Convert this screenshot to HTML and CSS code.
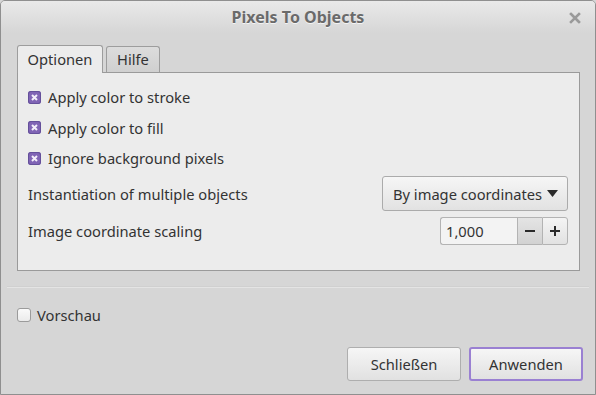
FILE: index.html
```html
<!DOCTYPE html>
<html>
<head>
<meta charset="utf-8">
<link rel="stylesheet" href="styles.css">
</head>
<body>
<div class="window">
  <div class="titlebar">
    <span></span>
    <span class="title">Pixels To Objects</span>
    <span class="close">
      <svg width="12" height="12" viewBox="0 0 12 12"><path d="M2 2 L10 10 M10 2 L2 10" stroke="#9a9a9a" stroke-width="2.6" stroke-linecap="square"/></svg>
    </span>
  </div>
  <div class="content">
    <div class="tabs">
      <div class="tab active">Optionen</div>
      <div class="tab">Hilfe</div>
    </div>
    <div class="panel">
      <div class="check-row"><span class="cb checked"><svg width="13" height="13" viewBox="0 0 13 13"><path d="M4 4 L9 9 M9 4 L4 9" stroke="#f3eefa" stroke-width="2"/></svg></span><span>Apply color to stroke</span></div>
      <div class="check-row"><span class="cb checked"><svg width="13" height="13" viewBox="0 0 13 13"><path d="M4 4 L9 9 M9 4 L4 9" stroke="#f3eefa" stroke-width="2"/></svg></span><span>Apply color to fill</span></div>
      <div class="check-row"><span class="cb checked"><svg width="13" height="13" viewBox="0 0 13 13"><path d="M4 4 L9 9 M9 4 L4 9" stroke="#f3eefa" stroke-width="2"/></svg></span><span>Ignore background pixels</span></div>
      <div class="opt-row combo-row">
        <span>Instantiation of multiple objects</span>
        <div class="combo">By image coordinates<svg width="11" height="7" viewBox="0 0 11 7"><path d="M0 0 H11 L5.5 7 Z" fill="#2a2a2a"/></svg></div>
      </div>
      <div class="opt-row spin-row">
        <span>Image coordinate scaling</span>
        <div class="spin">
          <div class="spin-entry">1,000</div>
          <div class="spin-btn"><svg width="12" height="12" viewBox="0 0 12 12"><path d="M1 6 H11" stroke="#2a2a2a" stroke-width="2"/></svg></div>
          <div class="spin-btn last"><svg width="12" height="12" viewBox="0 0 12 12"><path d="M1 6 H11 M6 1 V11" stroke="#2a2a2a" stroke-width="2"/></svg></div>
        </div>
      </div>
    </div>
  </div>
  <div class="separator"></div>
  <div class="preview"><span class="cb empty"></span><span>Vorschau</span></div>
  <div class="buttons">
    <div class="btn">Schließen</div>
    <div class="btn default">Anwenden</div>
  </div>
</div>
</body>
</html>
```

FILE: styles.css
```css
html, body {
  margin: 0;
  padding: 0;
  background: #d6d6d6;
}
body {
  font-family: "Noto Sans", "Open Sans", sans-serif;
  font-size: 14.7px;
  color: #333333;
}
.window {
  box-sizing: border-box;
  width: 596px;
  height: 395px;
  border: 1px solid #8f8f8f;
  border-radius: 5px 5px 0 0;
  background: #d6d6d6;
  display: flex;
  flex-direction: column;
  overflow: hidden;
}
.titlebar {
  height: 32px;
  flex: none;
  display: grid;
  grid-template-columns: 1fr auto 1fr;
  align-items: center;
  background: linear-gradient(#e9e9e9, #d8d8d8 90%, #d6d6d6);
}
.title {
  font-weight: bold;
  font-size: 16px;
  color: #6a6a6a;
  text-shadow: 0 1px 0 #f4f4f4;
}
.close {
  justify-self: end;
  display: flex;
  margin-right: 14px;
  margin-top: 1px;
}
.content {
  padding: 13px 15px 0 16px;
  display: flex;
  flex-direction: column;
}
.tabs {
  display: flex;
  align-items: flex-end;
  gap: 3px;
  height: 27px;
  position: relative;
  z-index: 1;
  margin-bottom: -1px;
}
.tab {
  box-sizing: border-box;
  height: 26px;
  border: 1px solid #9d9d9d;
  border-bottom: none;
  border-radius: 3px 3px 0 0;
  background: linear-gradient(#dcdcdc, #d0d0d0);
  display: flex;
  align-items: center;
  justify-content: center;
  line-height: 1;
  width: 54px;
  margin-bottom: 1px;
}
.tab.active {
  height: 28px;
  width: 86px;
  background: #ececec;
  padding-bottom: 1px;
  margin-bottom: 0;
}
.panel {
  box-sizing: border-box;
  height: 199px;
  border: 1px solid #9a9a9a;
  background: #ececec;
  padding: 9px 11px 0 10px;
  display: flex;
  flex-direction: column;
}
.check-row {
  height: 30.5px;
  display: flex;
  align-items: center;
  gap: 7px;
}
.cb {
  box-sizing: border-box;
  width: 13px;
  height: 13px;
  border-radius: 2px;
  display: flex;
  flex: none;
}
.cb.checked {
  background: #8064b5;
  box-shadow: inset 0 0 0 1px #64509a;
  border-radius: 3px;
}
.opt-row {
  display: flex;
  align-items: center;
  justify-content: space-between;
}
.combo-row {
  margin-top: 2.5px;
  height: 35px;
}
.combo {
  box-sizing: border-box;
  width: 186px;
  height: 35px;
  border: 1px solid #ababab;
  border-radius: 3px;
  background: linear-gradient(#f6f6f6, #e2e2e2);
  display: flex;
  align-items: center;
  justify-content: space-between;
  padding: 0 9px 0 10px;
  color: #333;
}
.spin-row {
  margin-top: 6px;
  height: 28px;
}
.spin {
  display: flex;
  height: 28px;
}
.spin-entry {
  box-sizing: border-box;
  width: 77px;
  height: 28px;
  border: 1px solid #b3b3b3;
  border-right: none;
  border-radius: 3px 0 0 3px;
  background: #f3f3f3;
  display: flex;
  align-items: center;
  padding-left: 5px;
  color: #333;
}
.spin-btn {
  box-sizing: border-box;
  width: 25px;
  height: 28px;
  border: 1px solid #b3b3b3;
  border-right: none;
  background: linear-gradient(#e4e4e4, #d2d2d2);
  display: flex;
  align-items: center;
  justify-content: center;
}
.spin-btn.last {
  width: 26px;
  border-right: 1px solid #b3b3b3;
  border-radius: 0 3px 3px 0;
  background: linear-gradient(#f4f4f4, #e2e2e2);
}
.separator {
  margin: 15px 6px 0 6px;
  height: 2px;
  border-top: 1px solid #d0d0d0;
  background: #e4e4e4;
  box-sizing: border-box;
}
.preview {
  display: flex;
  align-items: center;
  gap: 6px;
  margin: 19px 0 0 16px;
  height: 16px;
}
.cb.empty {
  width: 14px;
  height: 14px;
  border: 1px solid #9b9b9b;
  border-radius: 3px;
  background: linear-gradient(#fafafa, #ebebeb);
}
.buttons {
  margin-top: auto;
  margin-bottom: 13px;
  margin-right: 12px;
  display: flex;
  justify-content: flex-end;
  gap: 8px;
}
.btn {
  box-sizing: border-box;
  width: 114px;
  height: 34px;
  border: 1px solid #aeaeae;
  border-radius: 3px;
  background: linear-gradient(#f6f6f6, #e1e1e1);
  display: flex;
  align-items: center;
  justify-content: center;
  color: #333;
}
.btn.default {
  border: 2px solid #9a80d2;
}
```
